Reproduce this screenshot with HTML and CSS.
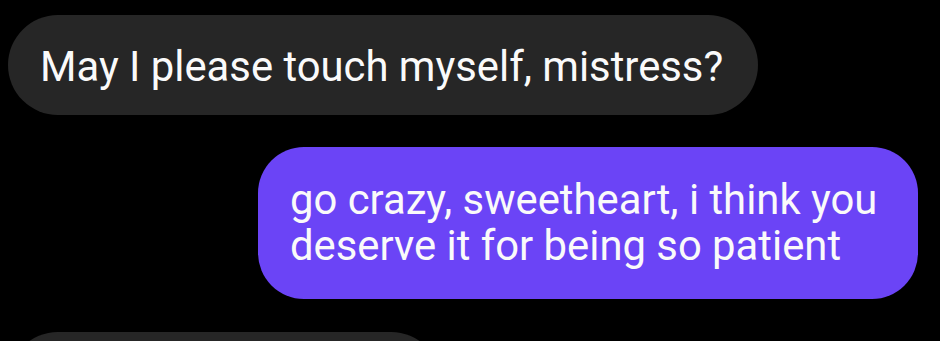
FILE: index.html
```html
<!DOCTYPE html>
<html>

<head>
  <meta charset="utf-8" />
  <title>Chat</title>
  <link rel="stylesheet" href="styles.css">
</head>

<body>
  <div class="thread">
    <div class="msg them">May I please touch myself, mistress?</div>
    <div class="msg me">go crazy, sweetheart, i think you deserve it for being so patient</div>
    <div class="msg them short">&nbsp;</div>
  </div>
</body>

</html>
```

FILE: styles.css
```css
html,
body {
  margin: 0;
  padding: 0;
  background: #000;
  height: 100%;
  overflow: hidden;
}

.thread {
  display: flex;
  flex-direction: column;
  gap: 32px;
  padding: 15px 22px 0 8px;
  font-family: Roboto, "Noto Sans", sans-serif;
}

.msg {
  color: #fafafa;
  font-size: 41.8px;
  line-height: 46px;
  box-sizing: border-box;
}

.them {
  align-self: flex-start;
  background: #262626;
  border-radius: 50px;
  height: 100px;
  padding: 29px 35px 0 32px;
}

.me {
  align-self: flex-end;
  background: #6b44f6;
  border-radius: 46px;
  width: 660px;
  padding: 30px 30px 30px 32px;
}

.short {
  width: 433px;
  margin-top: 1px;
}
```
